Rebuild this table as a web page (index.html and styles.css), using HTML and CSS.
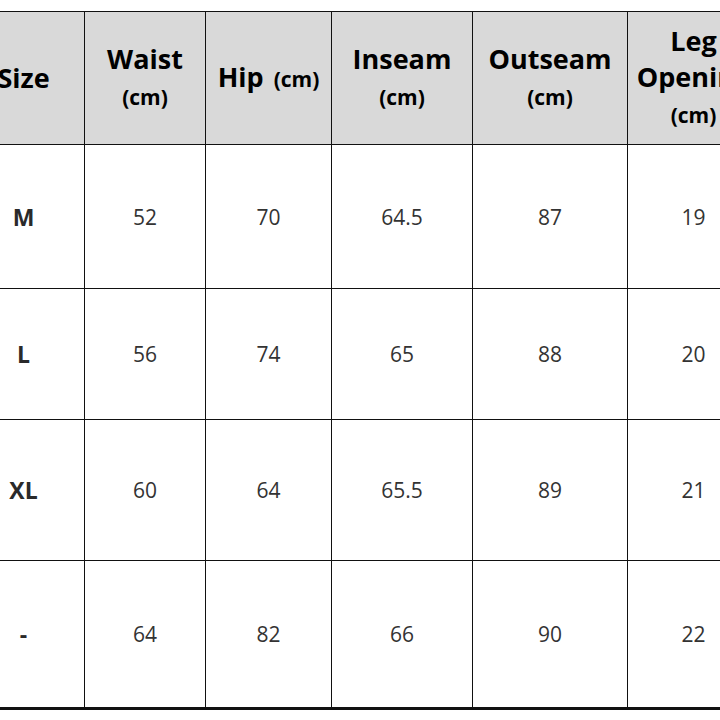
FILE: index.html
```html
<!DOCTYPE html>
<html>
<head>
<meta charset="utf-8">
<link rel="stylesheet" href="styles.css">
</head>
<body>
<div class="wrap">
<table class="chart">
  <colgroup>
    <col class="c-size"><col class="c-waist"><col class="c-hip"><col class="c-inseam"><col class="c-outseam"><col class="c-leg">
  </colgroup>
  <thead>
    <tr class="r-head">
      <th>Size</th>
      <th>Waist<br><span class="unit">(cm)</span></th>
      <th>Hip <span class="unit unit-inline">(cm)</span></th>
      <th>Inseam<br><span class="unit">(cm)</span></th>
      <th>Outseam<br><span class="unit">(cm)</span></th>
      <th>Leg<br>Opening<br><span class="unit">(cm)</span></th>
    </tr>
  </thead>
  <tbody>
    <tr class="r1"><td class="sz">M</td><td>52</td><td>70</td><td>64.5</td><td>87</td><td>19</td></tr>
    <tr class="r2"><td class="sz">L</td><td>56</td><td>74</td><td>65</td><td>88</td><td>20</td></tr>
    <tr class="r3"><td class="sz">XL</td><td>60</td><td>64</td><td>65.5</td><td>89</td><td>21</td></tr>
    <tr class="r4"><td class="sz">-</td><td>64</td><td>82</td><td>66</td><td>90</td><td>22</td></tr>
  </tbody>
</table>
</div>
</body>
</html>
```
FILE: styles.css
```css
html, body {
  margin: 0;
  padding: 0;
  background: #fff;
  overflow: hidden;
}
.wrap {
  width: 720px;
  height: 720px;
  overflow: hidden;
  padding-top: 11px;
  box-sizing: border-box;
}
.chart {
  margin-left: -38px;
  border-collapse: collapse;
  table-layout: fixed;
  width: 797px;
  font-family: "Open Sans", "Noto Sans", sans-serif;
}
.c-size { width: 122px; }
.c-waist { width: 121px; }
.c-hip { width: 126px; }
.c-inseam { width: 141px; }
.c-outseam { width: 155px; }
.c-leg { width: 132px; }
.chart th, .chart td {
  border: 1px solid #111;
  text-align: center;
  vertical-align: middle;
  padding: 0;
}
.chart th {
  background: #d9d9d9;
  color: #000;
  font-weight: 700;
  font-size: 27px;
  line-height: 36px;
  white-space: nowrap;
  overflow: hidden;
}
.chart .unit {
  font-size: 21px;
}
.chart .unit-inline {
  margin-left: 3px;
}
.chart td {
  color: #333;
  font-size: 21px;
  font-weight: 400;
}
.chart td.sz {
  font-weight: 700;
  font-size: 23px;
  color: #2a2a2a;
}
.r-head { height: 133px; }
.r1 { height: 144px; }
.r2 { height: 131px; }
.r3 { height: 141px; }
.r4 { height: 148px; }
.r4 td { border-bottom: 3px solid #111; }
```
